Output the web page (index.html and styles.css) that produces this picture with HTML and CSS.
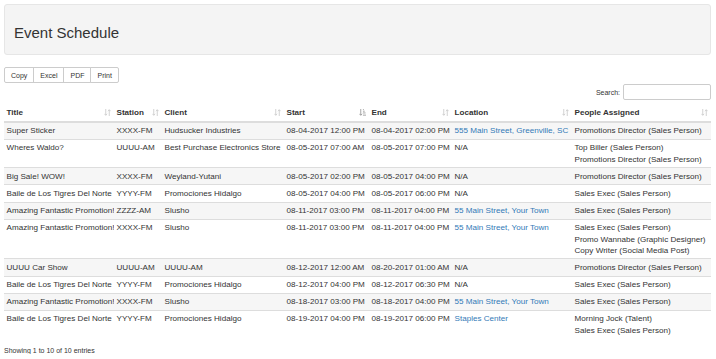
FILE: index.html
```html
<!DOCTYPE html>
<html lang="en">
<head>
  <meta charset="UTF-8">
  <title>Event Schedule</title>
  <link rel="stylesheet" href="styles.css">
</head>
<body>
  <div class="page">
    <div class="jumbotron">
      <h1>Event Schedule</h1>
    </div>

    <div class="buttons">
      <button class="btn">Copy</button>
      <button class="btn">Excel</button>
      <button class="btn">PDF</button>
      <button class="btn">Print</button>
    </div>

    <div class="search">
      <label>Search:</label>
      <input type="search" class="search-input">
    </div>

    <table class="schedule">
      <colgroup>
        <col class="c-title">
        <col class="c-station">
        <col class="c-client">
        <col class="c-start">
        <col class="c-end">
        <col class="c-location">
        <col class="c-people">
      </colgroup>
      <thead>
        <tr>
          <th>Title<svg class="sort" viewBox="0 0 8 8"><path d="M2 0v7M0.5 5.5L2 7.2 3.5 5.5M6 8V1M4.5 2.5L6 0.8 7.5 2.5"/></svg></th>
          <th>Station<svg class="sort" viewBox="0 0 8 8"><path d="M2 0v7M0.5 5.5L2 7.2 3.5 5.5M6 8V1M4.5 2.5L6 0.8 7.5 2.5"/></svg></th>
          <th>Client<svg class="sort" viewBox="0 0 8 8"><path d="M2 0v7M0.5 5.5L2 7.2 3.5 5.5M6 8V1M4.5 2.5L6 0.8 7.5 2.5"/></svg></th>
          <th>Start<svg class="sort active" viewBox="0 0 8 8"><path d="M2 0v7M0.5 5.5L2 7.2 3.5 5.5M4.5 0.5h1M4.5 2.5h2M4.5 4.5h3M4.5 7h3.5"/></svg></th>
          <th>End<svg class="sort" viewBox="0 0 8 8"><path d="M2 0v7M0.5 5.5L2 7.2 3.5 5.5M6 8V1M4.5 2.5L6 0.8 7.5 2.5"/></svg></th>
          <th>Location<svg class="sort" viewBox="0 0 8 8"><path d="M2 0v7M0.5 5.5L2 7.2 3.5 5.5M6 8V1M4.5 2.5L6 0.8 7.5 2.5"/></svg></th>
          <th>People Assigned<svg class="sort" viewBox="0 0 8 8"><path d="M2 0v7M0.5 5.5L2 7.2 3.5 5.5M6 8V1M4.5 2.5L6 0.8 7.5 2.5"/></svg></th>
        </tr>
      </thead>
      <tbody>
        <tr>
          <td>Super Sticker</td><td>XXXX-FM</td><td>Hudsucker Industries</td>
          <td>08-04-2017 12:00 PM</td><td>08-04-2017 02:00 PM</td>
          <td><a href="#">555 Main Street, Greenville, SC</a></td>
          <td>Promotions Director (Sales Person)</td>
        </tr>
        <tr>
          <td>Wheres Waldo?</td><td>UUUU-AM</td><td>Best Purchase Electronics Store</td>
          <td>08-05-2017 07:00 AM</td><td>08-05-2017 07:00 PM</td>
          <td>N/A</td>
          <td>Top Biller (Sales Person)<br>Promotions Director (Sales Person)</td>
        </tr>
        <tr>
          <td>Big Sale! WOW!</td><td>XXXX-FM</td><td>Weyland-Yutani</td>
          <td>08-05-2017 02:00 PM</td><td>08-05-2017 04:00 PM</td>
          <td>N/A</td>
          <td>Promotions Director (Sales Person)</td>
        </tr>
        <tr>
          <td>Baile de Los Tigres Del Norte</td><td>YYYY-FM</td><td>Promociones Hidalgo</td>
          <td>08-05-2017 04:00 PM</td><td>08-05-2017 06:00 PM</td>
          <td>N/A</td>
          <td>Sales Exec (Sales Person)</td>
        </tr>
        <tr>
          <td>Amazing Fantastic Promotion!</td><td>ZZZZ-AM</td><td>Slusho</td>
          <td>08-11-2017 03:00 PM</td><td>08-11-2017 04:00 PM</td>
          <td><a href="#">55 Main Street, Your Town</a></td>
          <td>Sales Exec (Sales Person)</td>
        </tr>
        <tr>
          <td>Amazing Fantastic Promotion!</td><td>XXXX-FM</td><td>Slusho</td>
          <td>08-11-2017 03:00 PM</td><td>08-11-2017 04:00 PM</td>
          <td><a href="#">55 Main Street, Your Town</a></td>
          <td>Sales Exec (Sales Person)<br>Promo Wannabe (Graphic Designer)<br>Copy Writer (Social Media Post)</td>
        </tr>
        <tr>
          <td>UUUU Car Show</td><td>UUUU-AM</td><td>UUUU-AM</td>
          <td>08-12-2017 12:00 AM</td><td>08-20-2017 01:00 AM</td>
          <td>N/A</td>
          <td>Promotions Director (Sales Person)</td>
        </tr>
        <tr>
          <td>Baile de Los Tigres Del Norte</td><td>YYYY-FM</td><td>Promociones Hidalgo</td>
          <td>08-12-2017 04:00 PM</td><td>08-12-2017 06:30 PM</td>
          <td>N/A</td>
          <td>Sales Exec (Sales Person)</td>
        </tr>
        <tr>
          <td>Amazing Fantastic Promotion!</td><td>XXXX-FM</td><td>Slusho</td>
          <td>08-18-2017 03:00 PM</td><td>08-18-2017 04:00 PM</td>
          <td><a href="#">55 Main Street, Your Town</a></td>
          <td>Sales Exec (Sales Person)</td>
        </tr>
        <tr>
          <td>Baile de Los Tigres Del Norte</td><td>YYYY-FM</td><td>Promociones Hidalgo</td>
          <td>08-19-2017 04:00 PM</td><td>08-19-2017 06:00 PM</td>
          <td><a href="#">Staples Center</a></td>
          <td>Morning Jock (Talent)<br>Sales Exec (Sales Person)</td>
        </tr>
      </tbody>
    </table>

    <div class="info">Showing 1 to 10 of 10 entries</div>
  </div>
</body>
</html>
```

FILE: styles.css
```css
* {
  box-sizing: border-box;
}

body {
  margin: 0;
  font-family: 'Liberation Sans', Arial, sans-serif;
  font-size: 8.1px;
  color: #333;
  background: #fff;
}

.page {
  padding: 4px 5px 0 4px;
}

.jumbotron {
  height: 51px;
  background-color: #f4f4f4;
  border: 1px solid #e6e6e6;
  border-radius: 3px;
  padding: 0 9px;
  display: flex;
  align-items: center;
}

.jumbotron h1 {
  margin: 6px 0 0;
  font-size: 15px;
  font-weight: normal;
  line-height: 18px;
  color: #333;
}

.buttons {
  display: flex;
  margin-top: 12px;
}

.btn {
  font-family: inherit;
  font-size: 7px;
  color: #333;
  background: #fff;
  border: 1px solid #ccc;
  height: 16px;
  padding: 0 6px;
  margin: 0 0 0 -1px;
  cursor: pointer;
}

.btn:first-child {
  margin-left: 0;
  border-radius: 2px 0 0 2px;
}

.btn:last-child {
  border-radius: 0 2px 2px 0;
}

.search {
  display: flex;
  justify-content: flex-end;
  align-items: center;
  gap: 3px;
  margin-top: 1px;
  font-size: 7px;
}

.search-input {
  width: 88px;
  height: 16px;
  border: 1px solid #ccc;
  border-radius: 2px;
  padding: 0 3px;
  font-size: 7px;
}

.schedule {
  width: 707px;
  table-layout: fixed;
  border-collapse: collapse;
  margin-top: 5px;
}

.c-title { width: 110px; }
.c-station { width: 48px; }
.c-client { width: 122px; }
.c-start { width: 85px; }
.c-end { width: 83px; }
.c-location { width: 120px; }
.c-people { width: 139px; }

.schedule th,
.schedule td {
  text-align: left;
  white-space: nowrap;
  overflow: hidden;
  line-height: 11.2px;
  padding: 2.6px 2.5px 2.4px;
  vertical-align: top;
}

.schedule th {
  position: relative;
  font-weight: bold;
  border-bottom: 2px solid #ddd;
  padding-top: 2px;
}

.schedule td {
  border-top: 1px solid #ddd;
}

.schedule tbody tr:nth-child(odd) {
  background-color: #f6f6f6;
}

.schedule tbody tr:first-child td {
  border-top: none;
}

.schedule a {
  color: #337ab7;
  text-decoration: none;
}

/* sort arrows */
.sort {
  position: absolute;
  right: 3px;
  top: 4px;
  width: 7px;
  height: 7px;
  fill: none;
  stroke: #ccc;
  stroke-width: 1;
}

.sort.active {
  stroke: #999;
}

.info {
  margin-top: 9px;
  font-size: 7px;
}
```
